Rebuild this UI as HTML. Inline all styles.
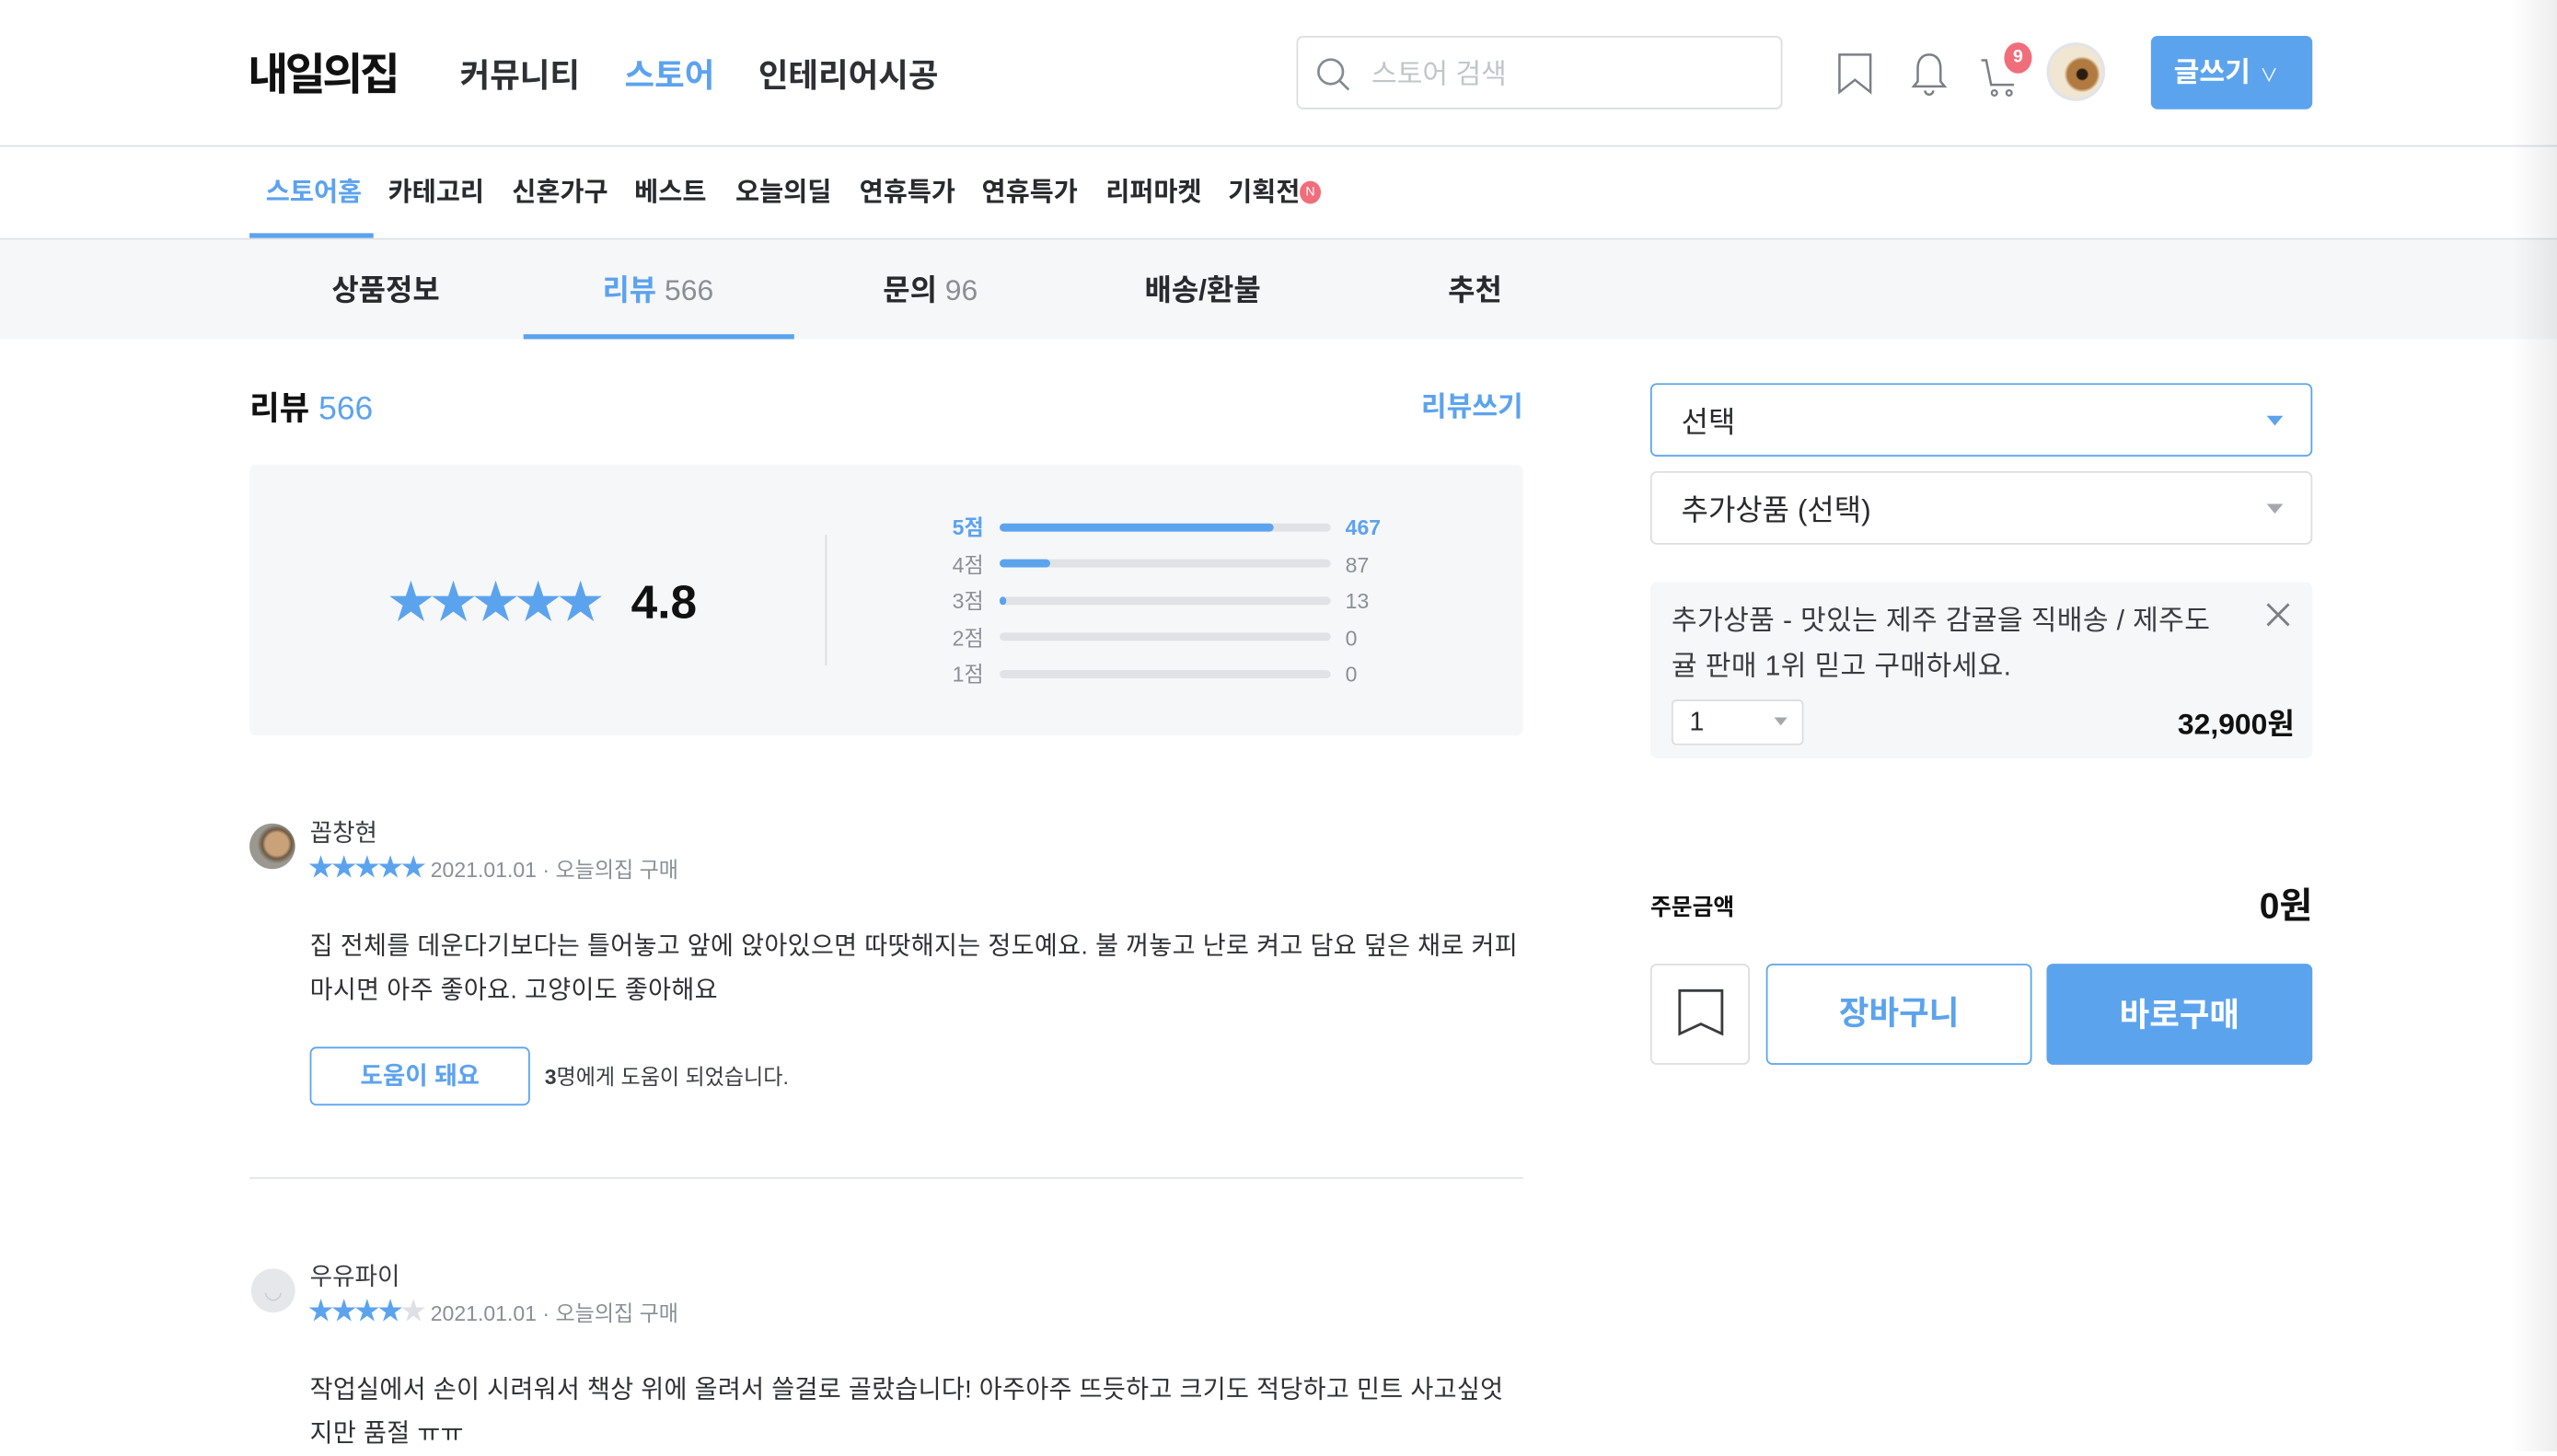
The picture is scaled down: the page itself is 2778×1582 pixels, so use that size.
<!DOCTYPE html>
<html><head><meta charset="utf-8">
<style>
*{margin:0;padding:0;box-sizing:border-box}
html,body{width:2778px;height:1576px;overflow:hidden;background:#fff}
#w{position:absolute;left:0;top:0;width:1568px;height:890px;transform:scale(1.77168);transform-origin:0 0;font-family:"Liberation Sans","Noto Sans CJK KR",sans-serif;color:#292a2d}
.a{position:absolute;white-space:nowrap}
.b{font-weight:700}
.blue{color:#5ca3ee}
.bar{position:absolute;left:613px;width:203px;height:5px;border-radius:3px;background:#e1e2e6}
.bar i{display:block;height:5px;border-radius:3px;background:#5ca3ee}
.lbl{position:absolute;left:584px;font-size:13px;color:#8a8f96;line-height:16px}
.cnt{position:absolute;left:825px;font-size:13px;color:#8a8f96;line-height:16px}
.st{color:#5ca3ee;letter-spacing:-1px}
</style></head><body>
<div id="w">
<!-- header -->
<div class="a b" style="left:152px;top:28px;font-size:27px;letter-spacing:-2px;color:#111;line-height:36px">내일의집</div>
<div class="a b" style="left:282px;top:33px;font-size:20px;line-height:28px;color:#2f3034">커뮤니티</div>
<div class="a b blue" style="left:383px;top:33px;font-size:20px;line-height:28px">스토어</div>
<div class="a b" style="left:465px;top:33px;font-size:20px;line-height:28px;color:#2f3034">인테리어시공</div>
<div class="a" style="left:795px;top:22px;width:298px;height:45px;border:1px solid #dcdde1;border-radius:4px"></div>
<svg class="a" style="left:806px;top:34px" width="24" height="24" viewBox="0 0 24 24"><circle cx="10" cy="10" r="7.5" fill="none" stroke="#838a92" stroke-width="1.5"/><path d="M15.5 15.5L21 21" stroke="#838a92" stroke-width="1.5"/></svg>
<div class="a" style="left:841px;top:34px;font-size:17px;line-height:24px;color:#c2c5ca">스토어 검색</div>
<svg class="a" style="left:1126px;top:32px" width="24" height="26" viewBox="0 0 24 26"><path d="M2 1.5H21V24.5L11.5 17L2 24.5Z" fill="none" stroke="#7a7f87" stroke-width="1.4"/></svg>
<svg class="a" style="left:1170px;top:31px" width="26" height="28" viewBox="0 0 26 28"><path d="M13 2.5C8.5 2.5 6 6 6 11V19L3.5 22H22.5L20 19V11C20 6 17.5 2.5 13 2.5Z" fill="none" stroke="#7a7f87" stroke-width="1.4"/><path d="M10.5 24.5a2.5 2.5 0 0 0 5 0" fill="none" stroke="#7a7f87" stroke-width="1.4"/></svg>
<svg class="a" style="left:1213px;top:33px" width="28" height="28" viewBox="0 0 28 28"><path d="M2 4H5L8 19H22" fill="none" stroke="#7a7f87" stroke-width="1.4"/><circle cx="10" cy="24" r="1.6" fill="none" stroke="#7a7f87" stroke-width="1.3"/><circle cx="19" cy="24" r="1.6" fill="none" stroke="#7a7f87" stroke-width="1.3"/></svg>
<div class="a b" style="left:1229px;top:26px;width:17px;height:19px;border-radius:50%;background:#f06e7b;color:#fff;font-size:11px;line-height:19px;text-align:center">9</div>
<div class="a" style="left:1255px;top:26px;width:36px;height:36px;border-radius:50%;background:#e3e4e8;padding:2px"><div style="width:32px;height:32px;border-radius:50%;background:radial-gradient(circle at 62% 55%,#2a1c10 0 3px,#b07a40 4px 9px,#f1e6d2 11px)"></div></div>
<div class="a b" style="left:1319px;top:22px;width:99px;height:45px;border-radius:4px;background:#5ca3ee;color:#fff;font-size:17px;line-height:46px;padding-left:14px">글쓰기<span style="font-size:11px;font-weight:400;margin-left:6px">∨</span></div>
<div class="a" style="left:0;top:89px;width:1568px;height:1px;background:#e0e1e5"></div>
<!-- sub nav -->
<div class="a b" style="left:163px;top:108px;font-size:16px;line-height:22px;color:#5ca3ee">스토어홈</div>
<div class="a b" style="left:238px;top:108px;font-size:16px;line-height:22px">카테고리</div>
<div class="a b" style="left:314px;top:108px;font-size:16px;line-height:22px">신혼가구</div>
<div class="a b" style="left:389px;top:108px;font-size:16px;line-height:22px">베스트</div>
<div class="a b" style="left:451px;top:108px;font-size:16px;line-height:22px">오늘의딜</div>
<div class="a b" style="left:527px;top:108px;font-size:16px;line-height:22px">연휴특가</div>
<div class="a b" style="left:602px;top:108px;font-size:16px;line-height:22px">연휴특가</div>
<div class="a b" style="left:678px;top:108px;font-size:16px;line-height:22px">리퍼마켓</div>
<div class="a b" style="left:753px;top:108px;font-size:16px;line-height:22px">기획전</div>
<div class="a" style="left:797px;top:111px;width:13px;height:14px;border-radius:50%;background:#f06e7b;color:#fff;font-size:8px;line-height:14px;text-align:center">N</div>
<div class="a" style="left:153px;top:143px;width:76px;height:3px;background:#5ca3ee"></div>
<div class="a" style="left:0;top:146px;width:1568px;height:1px;background:#e0e1e5"></div>
<!-- tabs -->
<div class="a" style="left:0;top:147px;width:1568px;height:61px;background:#f6f7f9"></div>
<div class="a b" style="left:153px;top:165px;width:167px;text-align:center;font-size:18px;line-height:26px">상품정보</div>
<div class="a b" style="left:320px;top:165px;width:167px;text-align:center;font-size:18px;line-height:26px"><span class="blue">리뷰</span> <span style="color:#8a8f96;font-weight:400">566</span></div>
<div class="a b" style="left:487px;top:165px;width:167px;text-align:center;font-size:18px;line-height:26px">문의 <span style="color:#8a8f96;font-weight:400">96</span></div>
<div class="a b" style="left:654px;top:165px;width:167px;text-align:center;font-size:18px;line-height:26px">배송/환불</div>
<div class="a b" style="left:821px;top:165px;width:167px;text-align:center;font-size:18px;line-height:26px">추천</div>
<div class="a" style="left:321px;top:205px;width:166px;height:3px;background:#5ca3ee"></div>
<!-- review header -->
<div class="a b" style="left:153px;top:237px;font-size:20px;line-height:28px;color:#111">리뷰 <span class="blue" style="font-weight:400">566</span></div>
<div class="a b blue" style="left:868px;top:238px;width:66px;text-align:right;font-size:17px;line-height:24px">리뷰쓰기</div>
<div class="a" style="left:153px;top:285px;width:781px;height:166px;background:#f6f7f9;border-radius:4px"></div>
<div class="a st" style="left:238px;top:352px;font-size:28px;line-height:36px;letter-spacing:-2px">★★★★★</div>
<div class="a b" style="left:387px;top:352px;font-size:29px;line-height:36px;color:#111">4.8</div>
<div class="a" style="left:506px;top:328px;width:1px;height:80px;background:#dcdde1"></div>
<div class="lbl" style="top:316px;color:#5ca3ee;font-weight:700">5점</div><div class="bar" style="top:321px"><i style="width:168px"></i></div><div class="cnt b" style="top:316px;color:#5ca3ee">467</div>
<div class="lbl" style="top:339px">4점</div><div class="bar" style="top:343px"><i style="width:31px"></i></div><div class="cnt" style="top:339px">87</div>
<div class="lbl" style="top:361px">3점</div><div class="bar" style="top:366px"><i style="width:4px"></i></div><div class="cnt" style="top:361px">13</div>
<div class="lbl" style="top:384px">2점</div><div class="bar" style="top:388px"></div><div class="cnt" style="top:384px">0</div>
<div class="lbl" style="top:406px">1점</div><div class="bar" style="top:411px"></div><div class="cnt" style="top:406px">0</div>
<!-- review 1 -->
<div class="a" style="left:153px;top:505px;width:28px;height:28px;border-radius:50%;background:radial-gradient(circle at 60% 45%,#c9a27a 0 7px,#6d5a45 9px,#9a9890 12px)"></div>
<div class="a" style="left:190px;top:501px;font-size:15px;line-height:22px;color:#3a3c40">꼽창현</div>
<div class="a st" style="left:189px;top:523px;font-size:15.5px;line-height:20px;letter-spacing:-1.3px">★★★★★</div>
<div class="a" style="left:264px;top:524px;font-size:13px;line-height:20px;color:#8a8f96">2021.01.01 · 오늘의집 구매</div>
<div class="a" style="left:190px;top:567px;font-size:15.3px;line-height:27px;color:#2f3034;letter-spacing:0.18px">집 전체를 데운다기보다는 틀어놓고 앞에 앉아있으면 따땃해지는 정도예요. 불 꺼놓고 난로 켜고 담요 덮은 채로 커피<br>마시면 아주 좋아요. 고양이도 좋아해요</div>
<div class="a b blue" style="left:190px;top:642px;width:135px;height:36px;border:1px solid #5ca3ee;border-radius:4px;text-align:center;font-size:15px;line-height:36px">도움이 돼요</div>
<div class="a" style="left:334px;top:651px;font-size:13px;line-height:20px;color:#3a3c40"><b>3</b>명에게 도움이 되었습니다.</div>
<div class="a" style="left:153px;top:722px;width:781px;height:1px;background:#e3e4e7"></div>
<!-- review 2 -->
<div class="a" style="left:154px;top:778px;width:27px;height:27px;border-radius:50%;background:#e6e7ea;color:#c9cbcf;font-size:13px;text-align:center;line-height:27px">◡</div>
<div class="a" style="left:190px;top:773px;font-size:15px;line-height:22px;color:#3a3c40">우유파이</div>
<div class="a st" style="left:189px;top:795px;font-size:15.5px;line-height:20px;letter-spacing:-1.3px">★★★★<span style="color:#dfe0e3">★</span></div>
<div class="a" style="left:264px;top:796px;font-size:13px;line-height:20px;color:#8a8f96">2021.01.01 · 오늘의집 구매</div>
<div class="a" style="left:190px;top:839px;font-size:15.3px;line-height:27px;color:#2f3034;letter-spacing:0.18px">작업실에서 손이 시려워서 책상 위에 올려서 쓸걸로 골랐습니다! 아주아주 뜨듯하고 크기도 적당하고 민트 사고싶엇<br>지만 품절 ㅠㅠ</div>
<!-- right panel -->
<div class="a" style="left:1012px;top:235px;width:406px;height:45px;border:1.5px solid #5ca3ee;border-radius:4px"></div>
<div class="a" style="left:1031px;top:246px;font-size:18px;line-height:26px">선택</div>
<div class="a" style="left:1390px;top:255px;border-left:5px solid transparent;border-right:5px solid transparent;border-top:6px solid #5ca3ee"></div>
<div class="a" style="left:1012px;top:289px;width:406px;height:45px;border:1px solid #dcdde1;border-radius:4px"></div>
<div class="a" style="left:1031px;top:300px;font-size:18px;line-height:26px">추가상품 (선택)</div>
<div class="a" style="left:1390px;top:309px;border-left:5px solid transparent;border-right:5px solid transparent;border-top:6px solid #a4a8ad"></div>
<div class="a" style="left:1012px;top:357px;width:406px;height:108px;background:#f6f7f9;border-radius:4px"></div>
<div class="a" style="left:1025px;top:367px;font-size:17px;line-height:28px;color:#3a3c40;letter-spacing:0.2px">추가상품 - 맛있는 제주 감귤을 직배송 / 제주도<br>귤 판매 1위 믿고 구매하세요.</div>
<svg class="a" style="left:1389px;top:369px" width="16" height="16" viewBox="0 0 16 16"><path d="M1.5 1.5L14.5 14.5M14.5 1.5L1.5 14.5" stroke="#7a7f87" stroke-width="1.6"/></svg>
<div class="a" style="left:1025px;top:429px;width:81px;height:28px;background:#fff;border:1px solid #dcdde1;border-radius:3px;font-size:16px;line-height:28px;padding-left:10px">1</div>
<div class="a" style="left:1088px;top:440px;border-left:4px solid transparent;border-right:4px solid transparent;border-top:5px solid #a4a8ad"></div>
<div class="a b" style="left:1250px;top:431px;width:157px;text-align:right;font-size:18px;line-height:26px;color:#111">32,900원</div>
<div class="a b" style="left:1012px;top:546px;font-size:14px;line-height:20px;color:#111">주문금액</div>
<div class="a b" style="left:1300px;top:541px;width:118px;text-align:right;font-size:22px;line-height:30px;color:#111">0원</div>
<div class="a" style="left:1012px;top:591px;width:61px;height:62px;border:1px solid #dcdde1;border-radius:4px"></div>
<svg class="a" style="left:1027px;top:605px" width="32" height="32" viewBox="0 0 32 32"><path d="M3 2.5H29V29L16 23L3 29Z" fill="none" stroke="#3a3c40" stroke-width="1.6"/></svg>
<div class="a b blue" style="left:1083px;top:591px;width:163px;height:62px;border:1.5px solid #5ca3ee;border-radius:4px;text-align:center;font-size:20px;line-height:61px">장바구니</div>
<div class="a b" style="left:1255px;top:591px;width:163px;height:62px;background:#5ca3ee;border-radius:4px;text-align:center;font-size:20px;line-height:64px;color:#fff">바로구매</div>
<div class="a" style="left:1540px;top:0;width:28px;height:890px;background:linear-gradient(to right,rgba(0,0,0,0),rgba(0,0,0,0.07))"></div>
</div>
</body></html>
